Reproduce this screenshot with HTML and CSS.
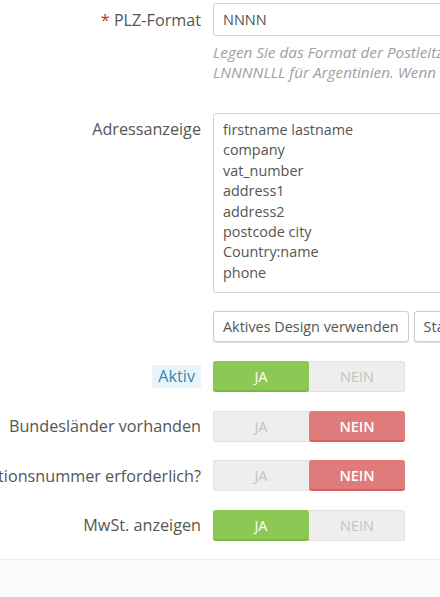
FILE: index.html
```html
<!DOCTYPE html>
<html lang="de">
<head>
<meta charset="utf-8">
<title>Land bearbeiten</title>
<link rel="stylesheet" href="styles.css">
</head>
<body>
<div class="panel">
  <div class="form">
    <div class="row row-plz">
      <div class="label"><span><span class="req">*</span> PLZ-Format</span></div>
      <div class="control">
        <input class="input" type="text" value="NNNN">
        <p class="help">Legen Sie das Format der Postleitzahl fest: L für Buchstabe, N für Zahl und C für Ländercode. Beispiele: NNNNN für die USA,<br>LNNNNLLL für Argentinien. Wenn Sie kein Format festlegen, wird die Postleitzahl nicht geprüft.</p>
      </div>
    </div>
    <div class="row row-addr">
      <div class="label label-top"><span>Adressanzeige</span></div>
      <div class="control">
        <textarea class="textarea" rows="8">firstname lastname
company
vat_number
address1
address2
postcode city
Country:name
phone</textarea>
      </div>
    </div>
    <div class="row row-btns">
      <div class="label"></div>
      <div class="control buttons">
        <button class="btn" type="button">Aktives Design verwenden</button>
        <button class="btn" type="button">Standard-Layout verwenden</button>
      </div>
    </div>
    <div class="row row-switch">
      <div class="label"><span class="tip">Aktiv</span></div>
      <div class="control">
        <div class="switch on"><span class="opt active">JA</span><span class="opt">NEIN</span></div>
      </div>
    </div>
    <div class="row row-switch">
      <div class="label"><span>Bundesländer vorhanden</span></div>
      <div class="control">
        <div class="switch off"><span class="opt">JA</span><span class="opt active">NEIN</span></div>
      </div>
    </div>
    <div class="row row-switch">
      <div class="label"><span>Umsatzsteuer-Identifikationsnummer erforderlich?</span></div>
      <div class="control">
        <div class="switch off"><span class="opt">JA</span><span class="opt active">NEIN</span></div>
      </div>
    </div>
    <div class="row row-switch last">
      <div class="label"><span>MwSt. anzeigen</span></div>
      <div class="control">
        <div class="switch on"><span class="opt active">JA</span><span class="opt">NEIN</span></div>
      </div>
    </div>
  </div>
  <div class="footer"></div>
</div>
</body>
</html>
```
FILE: styles.css
```css
html, body {
  margin: 0;
  padding: 0;
  background: #ffffff;
  overflow: hidden;
}
body {
  font-family: "Open Sans", "Liberation Sans", sans-serif;
  font-size: 14.5px;
  color: #555555;
  width: 440px;
  height: 597px;
}
.panel {
  display: flex;
  flex-direction: column;
  height: 597px;
}
.form {
  padding-top: 3px;
}
.row {
  display: flex;
  gap: 12px;
  align-items: center;
}
.label {
  width: 201px;
  flex: none;
  display: flex;
  justify-content: flex-end;
  white-space: nowrap;
  font-size: 16.2px;
  color: #555555;
}
.row-plz, .row-addr {
  align-items: flex-start;
}
.row-plz .label {
  height: 33px;
  align-items: center;
}
.row-plz {
  margin-bottom: 31px;
}
.label-top {
  padding-top: 5px;
}
.req {
  color: #c9302c;
}
.control {
  width: 320px;
  flex: none;
}
.input {
  box-sizing: border-box;
  display: block;
  width: 100%;
  height: 33px;
  margin: 0;
  padding: 0 9px;
  border: 1px solid #c7d6db;
  border-radius: 3px;
  background: #fff;
  font-family: inherit;
  font-size: 14.5px;
  color: #555;
  outline: none;
}
.help {
  margin: 6px 0 0;
  font-size: 15.3px;
  line-height: 20px;
  font-style: italic;
  color: #a0a0a0;
  white-space: nowrap;
}
.row-addr {
  margin-bottom: 18px;
}
.textarea {
  box-sizing: border-box;
  display: block;
  width: 100%;
  height: 180px;
  margin: 0;
  padding: 6px 9px;
  border: 1px solid #c7d6db;
  border-radius: 3px;
  font-family: inherit;
  font-size: 14.4px;
  line-height: 20.4px;
  color: #555;
  resize: none;
  overflow: hidden;
  outline: none;
}
.row-btns {
  margin-bottom: 19px;
}
.buttons {
  display: flex;
  gap: 5px;
  white-space: nowrap;
}
.btn {
  flex: none;
  height: 31px;
  margin: 0;
  padding: 0 9px;
  border: 1px solid #cccccc;
  border-radius: 3px;
  background: #ffffff;
  box-shadow: 0 1px 0 #e0e0e0;
  font-family: inherit;
  font-size: 14.4px;
  color: #555;
}
.row-switch {
  margin-bottom: 18.5px;
}
.row-switch.last {
  margin-bottom: 18px;
}
.tip {
  display: inline-block;
  padding: 2px 6px;
  line-height: 19px;
  background: #e9f4fa;
  color: #3586b6;
}
.switch {
  display: flex;
  width: 192px;
  height: 31px;
  box-sizing: border-box;
  border-radius: 3px;
  background: #eeeeee;
  box-shadow: inset 0 0 0 1px #e1e1e1;
  font-size: 14.5px;
}
.opt {
  flex: 1;
  display: flex;
  align-items: center;
  justify-content: center;
  color: #c3c3c3;
  border-radius: 3px;
}
.switch.on .opt.active {
  background: #8bc954;
  border-bottom: 2px solid #7cb848;
  box-sizing: border-box;
  padding-top: 2px;
  color: #ffffff;
}
.switch.off .opt.active {
  background: #e07b7b;
  border-bottom: 2px solid #d86060;
  box-sizing: border-box;
  padding-top: 2px;
  color: #ffffff;
  font-weight: 600;
}
.footer {
  flex: 1;
  border-top: 1px solid #eeeeee;
  background: #fafbfc;
}
```
